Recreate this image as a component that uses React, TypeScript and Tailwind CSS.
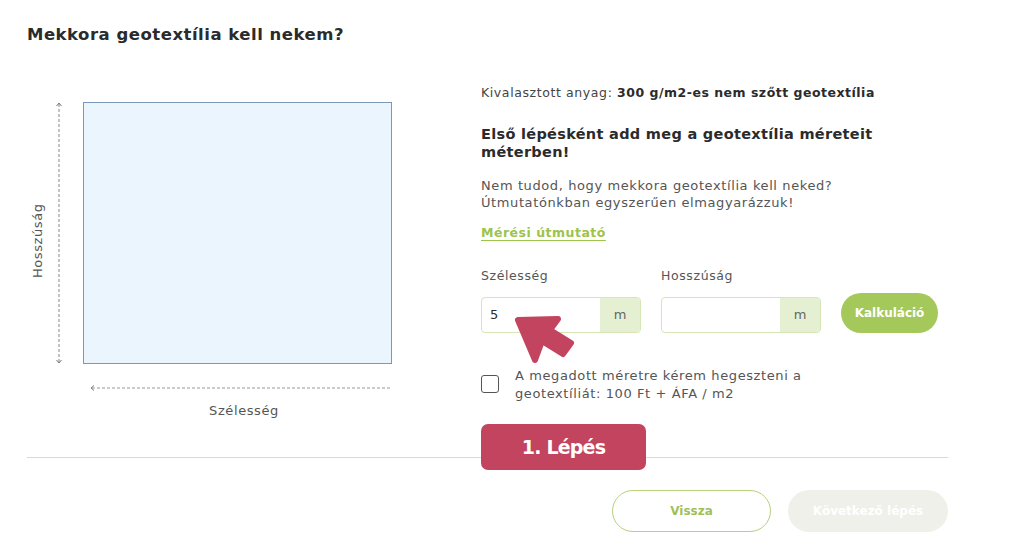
import React from "react";

const font = { fontFamily: '"DejaVu Sans", "Liberation Sans", sans-serif' };

export default function App() {
  return (
    <div className="w-[1024px] h-[560px] bg-white overflow-hidden text-[#2d2d2d]" style={font}>
      <div className="ml-[27px] w-[921px] pt-[25px]">
        <h1 className="text-[16.5px] leading-[20px] font-bold text-[#2b2b2b] tracking-[0.5px]">Mekkora geotextília kell nekem?</h1>
        <div className="flex mt-[39px]">
          {/* Left diagram */}
          <div className="w-[454px] pt-[18px]">
            <div className="flex">
              <div className="w-[20px] flex items-center justify-center">
                <span className="-rotate-90 translate-y-[8px] whitespace-nowrap text-[13px] text-[#555] tracking-[0.6px]">Hosszúság</span>
              </div>
              <div className="w-[24px] flex justify-center">
                <svg width="8" height="262" viewBox="0 0 8 262">
                  <line x1="4" y1="2" x2="4" y2="260" stroke="#888" strokeWidth="1" strokeDasharray="3 2" />
                  <polyline points="1.5,4 4,1 6.5,4" fill="none" stroke="#777" strokeWidth="1" />
                  <polyline points="1.5,258 4,261 6.5,258" fill="none" stroke="#777" strokeWidth="1" />
                </svg>
              </div>
              <div className="ml-[12px] w-[309px] h-[262px] bg-[#ebf5fe] border-[1.5px] border-[#7a98bb]"></div>
            </div>
            <div className="ml-[63px] mt-[20px] h-[8px]">
              <svg width="302" height="8" viewBox="0 0 302 8">
                <line x1="2" y1="4" x2="302" y2="4" stroke="#999" strokeWidth="1" strokeDasharray="3 2" />
                <polyline points="4,1.5 1,4 4,6.5" fill="none" stroke="#777" strokeWidth="1" />
              </svg>
            </div>
            <div className="ml-[66px] w-[302px] text-center mt-[10px] text-[13px] leading-[18px] text-[#555] tracking-[0.6px]">Szélesség</div>
          </div>
          {/* Right column */}
          <div className="flex-1">
            <p className="text-[12.5px] leading-[18px] text-[#444] tracking-[0.6px]">
              Kivalasztott anyag: <span className="font-bold text-[#2b2b2b] tracking-[0.5px]">300 g/m2-es nem szőtt geotextília</span>
            </p>
            <h2 className="mt-[23px] w-[420px] text-[14.5px] leading-[18px] font-bold text-[#2b2b2b] tracking-[0.3px]">
              Első lépésként add meg a geotextília méreteit méterben!
            </h2>
            <p className="mt-[16px] text-[13px] leading-[17px] text-[#555] tracking-[0.6px]">
              Nem tudod, hogy mekkora geotextília kell neked?
              <br />
              Útmutatónkban egyszerűen elmagyarázzuk!
            </p>
            <a className="block mt-[13px] text-[12.5px] leading-[18px] font-bold text-[#9dc44b] underline underline-offset-[3px] tracking-[0.5px]">Mérési útmutató</a>
            <div className="flex items-end mt-[25px] relative">
              <div className="w-[160px]">
                <div className="text-[12.5px] leading-[18px] text-[#555] tracking-[0.6px]">Szélesség</div>
                <div className="mt-[12px] h-[36px] flex border border-[#d6e5b6] rounded-[4px] overflow-hidden">
                  <div className="flex-1 flex items-center pl-[8px] text-[13px] text-[#2b2b2b]">5</div>
                  <div className="w-[40px] bg-[#e5f0d2] flex items-center justify-center text-[13px] text-[#666]">m</div>
                </div>
              </div>
              <div className="w-[160px] ml-[20px]">
                <div className="text-[12.5px] leading-[18px] text-[#555] tracking-[0.6px]">Hosszúság</div>
                <div className="mt-[12px] h-[36px] flex border border-[#d6e5b6] rounded-[4px] overflow-hidden">
                  <div className="flex-1"></div>
                  <div className="w-[40px] bg-[#e5f0d2] flex items-center justify-center text-[13px] text-[#666]">m</div>
                </div>
              </div>
              <button className="ml-[20px] w-[97px] h-[40px] rounded-full bg-[#a5c85b] text-white text-[12px] font-bold">Kalkuláció</button>
              <svg className="absolute left-[31px] top-[45px]" width="64" height="56" viewBox="0 0 64 56">
                <polygon
                  points="6,8 46,7 38,18 59,31 51,42 30,29 23,48"
                  fill="#c2445f"
                  stroke="#c2445f"
                  strokeWidth="6"
                  strokeLinejoin="round"
                />
              </svg>
            </div>
            <div className="flex mt-[34px]">
              <div className="w-[18px] h-[18px] mt-[8px] border-[1.5px] border-[#555] rounded-[3px]"></div>
              <p className="ml-[16px] text-[13px] leading-[18px] text-[#555] tracking-[0.6px]">
                A megadott méretre kérem hegeszteni a
                <br />
                geotextíliát: 100 Ft + ÁFA / m2
              </p>
            </div>
            <div className="relative z-10 mt-[21px] w-[165px] h-[46px] rounded-[7px] bg-[#c2445f] flex items-center justify-center text-white text-[19px] font-bold tracking-[-0.8px]">
              1. Lépés
            </div>
          </div>
        </div>
        <div className="-mt-[13px] h-px bg-[#d9d9d9]"></div>
        <div className="flex justify-end mt-[32px] gap-[17px]">
          <button className="w-[159px] h-[42px] rounded-full border-[1.5px] border-[#b7d17c] text-[#9fbf5a] text-[12px] font-bold">Vissza</button>
          <button className="w-[160px] h-[42px] rounded-full bg-[#eff0ea] text-white text-[12px] font-bold">Következő lépés</button>
        </div>
      </div>
    </div>
  );
}
